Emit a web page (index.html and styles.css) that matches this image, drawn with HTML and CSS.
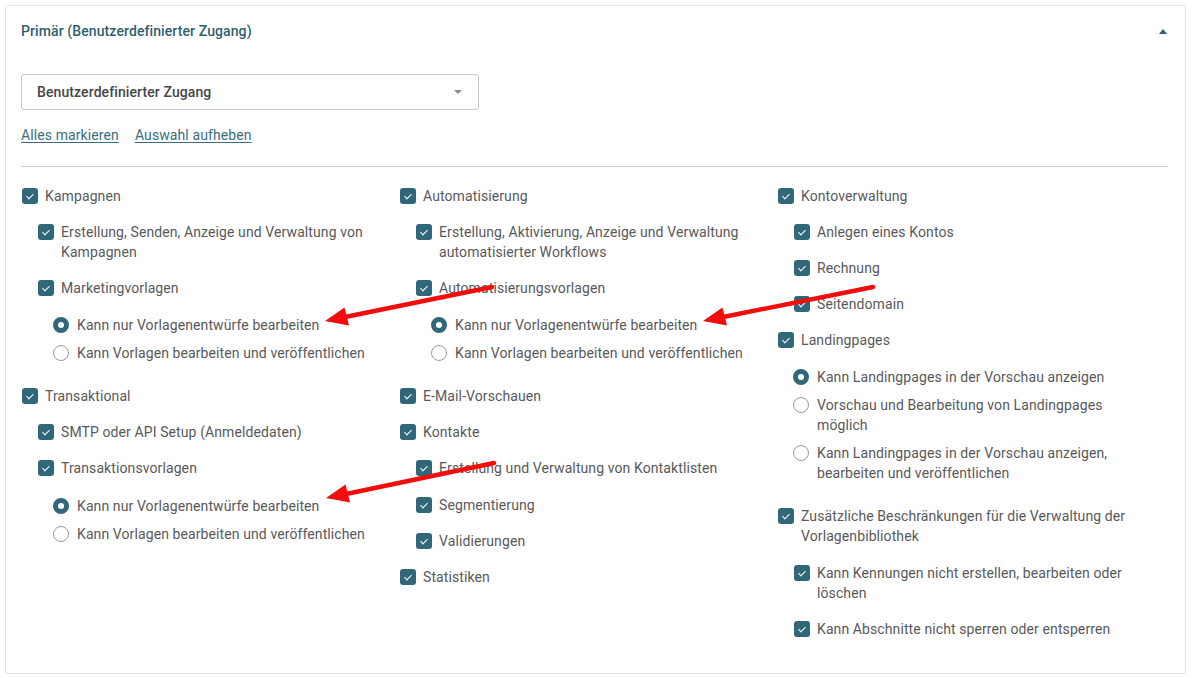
FILE: index.html
```html
<!DOCTYPE html>
<html lang="de">
<head>
<meta charset="utf-8">
<title>Primär (Benutzerdefinierter Zugang)</title>
<link rel="stylesheet" href="styles.css">
</head>
<body>
<div class="card">
  <div class="card-head">
    <span class="title">Primär (Benutzerdefinierter Zugang)</span>
    <span class="caret-up"></span>
  </div>
  <div class="card-body">
    <div class="select">
      <span>Benutzerdefinierter Zugang</span>
      <span class="caret-down"></span>
    </div>
    <div class="links">
      <a href="#">Alles markieren</a>
      <a href="#">Auswahl aufheben</a>
    </div>
    <div class="sep"></div>
    <div class="cols">
      <div class="col">
        <div class="item"><span class="box"></span><span>Kampagnen</span></div>
        <div class="sub">
          <div class="item"><span class="box"></span><span>Erstellung, Senden, Anzeige und Verwaltung von Kampagnen</span></div>
          <div class="item"><span class="box"></span><span>Marketingvorlagen</span></div>
          <div class="radios">
            <div class="ritem"><span class="radio on"></span><span>Kann nur Vorlagenentwürfe bearbeiten</span></div>
            <div class="ritem"><span class="radio"></span><span>Kann Vorlagen bearbeiten und veröffentlichen</span></div>
          </div>
        </div>
        <div class="item"><span class="box"></span><span>Transaktional</span></div>
        <div class="sub">
          <div class="item"><span class="box"></span><span>SMTP oder API Setup (Anmeldedaten)</span></div>
          <div class="item"><span class="box"></span><span>Transaktionsvorlagen</span></div>
          <div class="radios">
            <div class="ritem"><span class="radio on"></span><span>Kann nur Vorlagenentwürfe bearbeiten</span></div>
            <div class="ritem"><span class="radio"></span><span>Kann Vorlagen bearbeiten und veröffentlichen</span></div>
          </div>
        </div>
      </div>
      <div class="col">
        <div class="item"><span class="box"></span><span>Automatisierung</span></div>
        <div class="sub">
          <div class="item"><span class="box"></span><span>Erstellung, Aktivierung, Anzeige und Verwaltung automatisierter Workflows</span></div>
          <div class="item"><span class="box"></span><span>Automatisierungsvorlagen</span></div>
          <div class="radios">
            <div class="ritem"><span class="radio on"></span><span>Kann nur Vorlagenentwürfe bearbeiten</span></div>
            <div class="ritem"><span class="radio"></span><span>Kann Vorlagen bearbeiten und veröffentlichen</span></div>
          </div>
        </div>
        <div class="item"><span class="box"></span><span>E-Mail-Vorschauen</span></div>
        <div class="item"><span class="box"></span><span>Kontakte</span></div>
        <div class="sub">
          <div class="item"><span class="box"></span><span>Erstellung und Verwaltung von Kontaktlisten</span></div>
          <div class="item"><span class="box"></span><span>Segmentierung</span></div>
          <div class="item"><span class="box"></span><span>Validierungen</span></div>
        </div>
        <div class="item"><span class="box"></span><span>Statistiken</span></div>
      </div>
      <div class="col">
        <div class="item"><span class="box"></span><span>Kontoverwaltung</span></div>
        <div class="sub">
          <div class="item"><span class="box"></span><span>Anlegen eines Kontos</span></div>
          <div class="item"><span class="box"></span><span>Rechnung</span></div>
          <div class="item"><span class="box"></span><span>Seitendomain</span></div>
        </div>
        <div class="item"><span class="box"></span><span>Landingpages</span></div>
        <div class="radios">
          <div class="ritem"><span class="radio on"></span><span>Kann Landingpages in der Vorschau anzeigen</span></div>
          <div class="ritem"><span class="radio"></span><span>Vorschau und Bearbeitung von Landingpages möglich</span></div>
          <div class="ritem"><span class="radio"></span><span>Kann Landingpages in der Vorschau anzeigen, bearbeiten und veröffentlichen</span></div>
        </div>
        <div class="item"><span class="box"></span><span>Zusätzliche Beschränkungen für die Verwaltung der Vorlagenbibliothek</span></div>
        <div class="sub">
          <div class="item"><span class="box"></span><span>Kann Kennungen nicht erstellen, bearbeiten oder löschen</span></div>
          <div class="item"><span class="box"></span><span>Kann Abschnitte nicht sperren oder entsperren</span></div>
        </div>
      </div>
    </div>
  </div>
</div>
<svg class="arrows" width="1191" height="678" viewBox="0 0 1191 678" aria-hidden="true">
  <g stroke="#f20d0d" stroke-width="4.5" stroke-linecap="round" fill="none">
    <line x1="492" y1="287" x2="345" y2="317"/>
    <line x1="873" y1="287" x2="723" y2="317"/>
    <line x1="494" y1="463" x2="346" y2="494"/>
  </g>
  <g fill="#f20d0d">
    <polygon points="325,321 349,325.5 344.5,307.5"/>
    <polygon points="703,321 727,325.5 722.5,307.5"/>
    <polygon points="326,498 350,502.5 345.5,484.5"/>
  </g>
</svg>
</body>
</html>
```
FILE: styles.css
```css
html, body {
  margin: 0;
  padding: 0;
  background: #ffffff;
}
body {
  padding: 5px 5px 0 5px;
  font-family: Roboto, "Liberation Sans", Arial, sans-serif;
  font-size: 14px;
  line-height: 20px;
  letter-spacing: 0.1px;
  color: #595959;
}
.card {
  border: 1px solid #e4e4e4;
  border-radius: 2px;
  background: #fff;
}
.card-head {
  display: flex;
  align-items: center;
  justify-content: space-between;
  padding: 15px 18px 16px 15px;
}
.title {
  font-weight: 500;
  color: #2d5f6e;
}
.caret-up {
  width: 0;
  height: 0;
  border-left: 4px solid transparent;
  border-right: 4px solid transparent;
  border-bottom: 5px solid #2d5f6e;
}
.card-body {
  padding: 17px 17px 26px 15px;
}
.select {
  box-sizing: border-box;
  width: 458px;
  height: 36px;
  border: 1px solid #c9c9c9;
  border-radius: 3px;
  display: flex;
  align-items: center;
  justify-content: space-between;
  padding: 0 16px 0 15px;
  font-weight: 500;
  color: #464646;
}
.caret-down {
  width: 0;
  height: 0;
  border-left: 4px solid transparent;
  border-right: 4px solid transparent;
  border-top: 4px solid #8a8a8a;
}
.links {
  display: flex;
  gap: 16px;
  margin-top: 15px;
}
.links a {
  color: #3a6e7d;
  text-decoration: underline;
  text-underline-offset: 2px;
}
.sep {
  height: 1px;
  background: #cfcfcf;
  margin: 21px 0 11px 0;
}
.cols {
  display: grid;
  grid-template-columns: 378px 378px 378px;
}
.col {
  padding-right: 16px;
}
.item {
  display: flex;
  align-items: flex-start;
  gap: 7px;
  padding: 8px 0 8.1px 0;
}
.sub {
  padding-left: 16px;
}
.box {
  position: relative;
  flex: none;
  width: 16px;
  height: 16px;
  margin: 2px 0 0 1px;
  border-radius: 3px;
  background: #306779;
}
.box::after {
  content: "";
  position: absolute;
  left: 5.5px;
  top: 4px;
  width: 3px;
  height: 6px;
  border: solid #ffffff;
  border-width: 0 1.6px 1.6px 0;
  transform: rotate(45deg);
}
.radios {
  padding: 5px 0 11px 16px;
}
.ritem {
  display: flex;
  align-items: flex-start;
  gap: 8px;
  padding: 4px 0;
}
.radio {
  box-sizing: border-box;
  flex: none;
  width: 16px;
  height: 16px;
  margin-top: 2px;
  border-radius: 50%;
  border: 1px solid #9c9c9c;
  background: #fff;
}
.radio.on {
  border: 5px solid #306779;
}
.arrows {
  position: absolute;
  left: 0;
  top: 0;
  pointer-events: none;
}
```
